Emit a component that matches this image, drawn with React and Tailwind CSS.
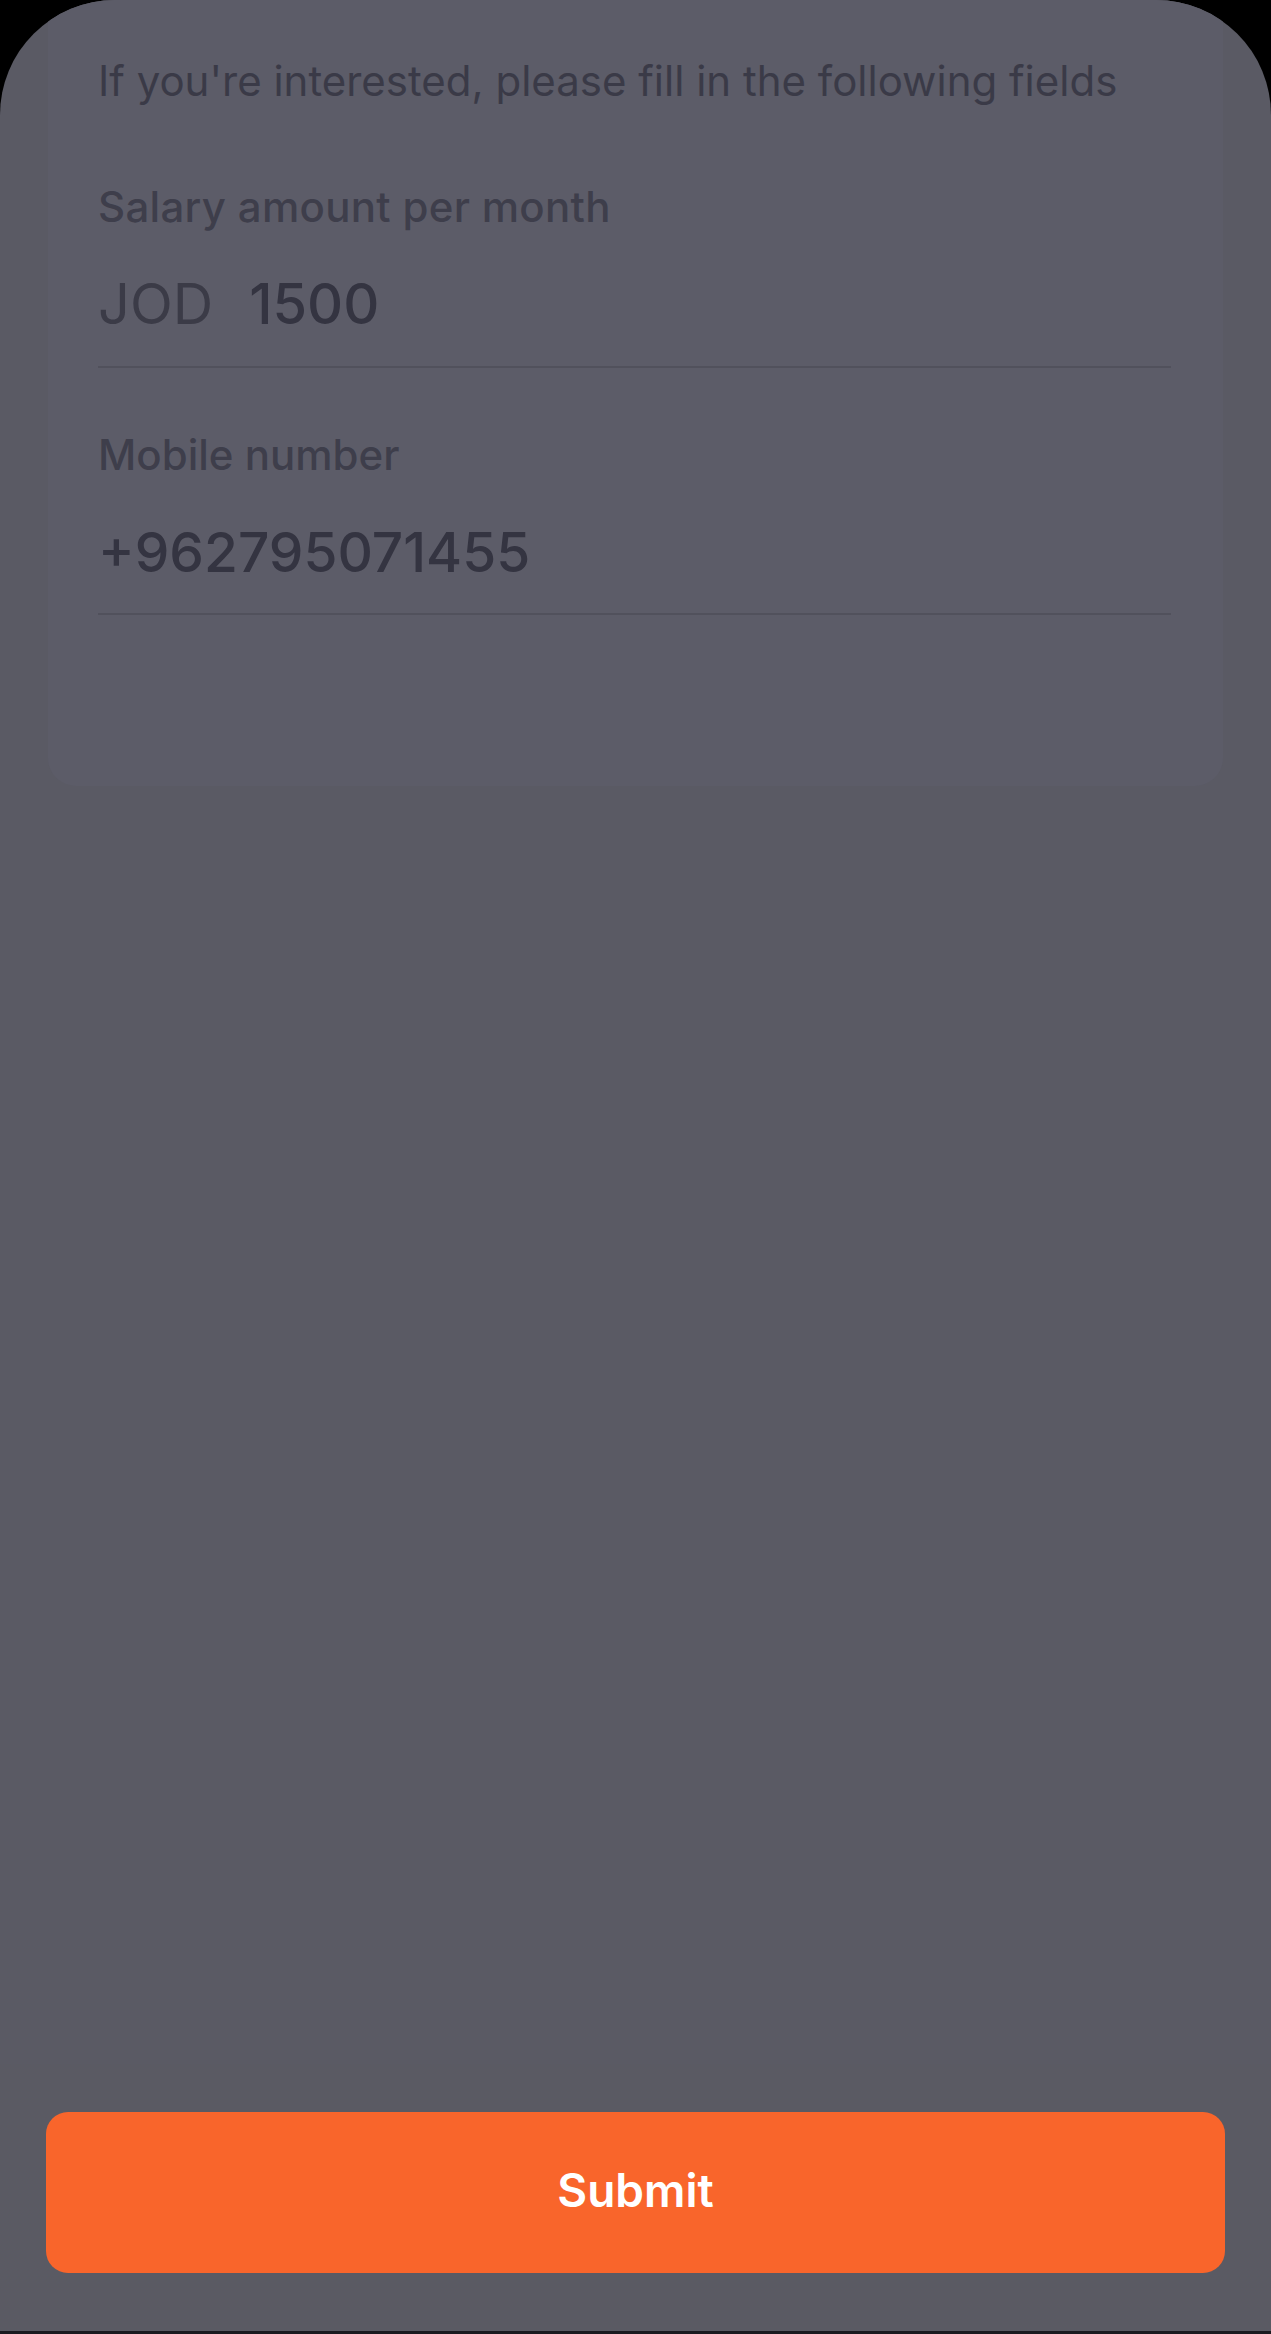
import React from "react";

export default function App() {
  const font = { fontFamily: "Inter, 'Noto Sans', sans-serif" };
  return (
    <div className="w-full h-[2334px] bg-black flex flex-col" style={font}>
      <div className="flex-1 flex flex-col bg-[#5a5a64] rounded-t-[115px] overflow-hidden">
        <div className="mx-[48px] bg-[#5c5c68] rounded-b-[28px] pl-[50px] pr-[52px] pt-[57px] pb-[171px]">
          <p className="text-[42px] leading-[48px] text-[#3a3a47] whitespace-nowrap">
            If you're interested, please fill in the following fields
          </p>
          <p className="mt-[78px] text-[42px] leading-[48px] font-medium text-[#3e3e4b] tracking-[0.3px]">
            Salary amount per month
          </p>
          <div className="mt-[41px] flex items-center h-[64px] border-b-2 border-[#51515c] box-content pb-[30px]">
            <span className="text-[56px] leading-[64px] text-[#3b3b47]">JOD</span>
            <span className="ml-[36px] text-[56px] leading-[64px] font-medium text-[#343441]">1500</span>
          </div>
          <p className="mt-[63px] text-[42px] leading-[48px] font-medium text-[#3e3e4b]">
            Mobile number
          </p>
          <div className="mt-[41px] flex items-center h-[64px] border-b-2 border-[#51515c] box-content pb-[29px]">
            <span className="text-[55px] leading-[64px] font-medium text-[#343441]">+962795071455</span>
          </div>
        </div>
        <div className="flex-1" />
        <div className="bg-[#5a5a63] px-[46px] pt-[48px] pb-[58px]">
          <button className="w-full h-[161px] rounded-[22px] bg-[#f9652b] text-white text-[46px] font-semibold flex items-center justify-center pb-[4px]">
            Submit
          </button>
        </div>
      </div>
      <div className="h-[3px] bg-[#1b1b20]" />
    </div>
  );
}
